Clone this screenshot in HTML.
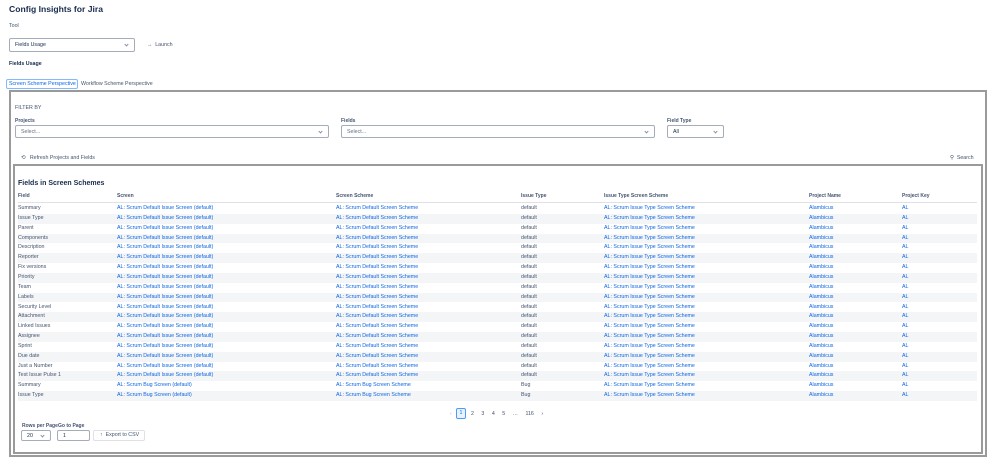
<!DOCTYPE html>
<html><head><meta charset="utf-8"><style>
*{margin:0;padding:0;box-sizing:border-box}
body{width:999px;height:471px;background:#fff;font-family:"Liberation Sans",sans-serif;color:#172b4d;position:relative;overflow:hidden}
.a{position:absolute;white-space:nowrap}
.s{font-size:5.3px;color:#44546f}
.sel{position:absolute;border:1px solid #a5adba;border-radius:2px;background:#fff;font-size:5.3px;color:#626f86;padding-left:5px;display:flex;align-items:center}
.chev{position:absolute;right:6px;top:50%;width:3px;height:3px;border-right:.6px solid #8590a2;border-bottom:.6px solid #8590a2;transform:translateY(-70%) rotate(45deg)}
.row{position:absolute;left:18px;width:959px;height:9.85px;font-size:5.3px;line-height:9.85px}
.row.sh{background:#f4f5f7}
.row span{position:absolute;top:0}
.l{color:#0c66e4}
.lab{font-size:5px;font-weight:bold;color:#44546f}
</style></head><body>
<div class="a" style="left:9px;top:4px;font-size:8.6px;font-weight:bold">Config Insights for Jira</div>
<div class="a s" style="left:9px;top:23px">Tool</div>
<div class="sel" style="left:9px;top:38px;width:126px;height:14px;color:#172b4d">Fields Usage<div class="chev"></div></div>
<div class="a s" style="left:147px;top:42px;color:#44546f">→&nbsp; Launch</div>
<div class="a lab" style="left:9px;top:61px;color:#172b4d;font-size:5.3px">Fields Usage</div>
<div class="a" style="left:6px;top:79px;width:72px;height:10px;border:1px solid #85b8ff;border-radius:2px;font-size:5.3px;color:#0c66e4;line-height:8px;padding-left:2px">Screen Scheme Perspective</div>
<div class="a s" style="left:81px;top:81px">Workflow Scheme Perspective</div>
<div class="a" style="left:9px;top:90px;width:978px;height:367px;border:2px solid #9a9a9a"></div>
<div class="a s" style="left:15px;top:105px;color:#44546f">FILTER BY</div>
<div class="a lab" style="left:15px;top:118px">Projects</div>
<div class="sel" style="left:15px;top:125px;width:314px;height:13px">Select...<div class="chev"></div></div>
<div class="a lab" style="left:341px;top:118px">Fields</div>
<div class="sel" style="left:341px;top:125px;width:314px;height:13px">Select...<div class="chev"></div></div>
<div class="a lab" style="left:667px;top:118px">Field Type</div>
<div class="sel" style="left:667px;top:125px;width:57px;height:13px;color:#172b4d">All<div class="chev"></div></div>
<div class="a s" style="left:21px;top:155px">⟲&nbsp;&nbsp; Refresh Projects and Fields</div>
<div class="a s" style="left:950px;top:155px">⚲&nbsp; Search</div>
<div class="a" style="left:13px;top:164px;width:970px;height:290px;border:2px solid #9a9a9a"></div>
<div class="a" style="left:18px;top:180px;font-size:7px;font-weight:bold">Fields in Screen Schemes</div>
<div class="row" style="top:192px;border-bottom:1px solid #dfe1e6;height:11px;font-weight:bold;color:#44546f;font-size:5px"><span style="left:0">Field</span><span style="left:99px">Screen</span><span style="left:318px">Screen Scheme</span><span style="left:503px">Issue Type</span><span style="left:586px">Issue Type Screen Scheme</span><span style="left:791px">Project Name</span><span style="left:884px">Project Key</span></div>
<div id="rows"></div>
<script>
var f=["Summary","Issue Type","Parent","Components","Description","Reporter","Fix versions","Priority","Team","Labels","Security Level","Attachment","Linked Issues","Assignee","Sprint","Due date","Just a Number","Test Issue Pulse 1","Summary","Issue Type"];
var h="";
for(var i=0;i<20;i++){var b=i>=18;
h+='<div class="row'+(i%2?' sh':'')+'" style="top:'+(204+i*9.85)+'px"><span style="left:0;color:#44546f">'+f[i]+'</span><span class="l" style="left:99px">AL: Scrum '+(b?'Bug Screen':'Default Issue Screen')+' (default)</span><span class="l" style="left:318px">AL: Scrum '+(b?'Bug':'Default')+' Screen Scheme</span><span style="left:503px;color:#44546f">'+(b?'Bug':'default')+'</span><span class="l" style="left:586px">AL: Scrum Issue Type Screen Scheme</span><span class="l" style="left:791px">Alambicus</span><span class="l" style="left:884px">AL</span></div>';}
document.getElementById("rows").innerHTML=h;
</script>
<div class="a s" style="left:450px;top:411px;color:#b3b9c4">‹</div>
<div class="a" style="left:456px;top:408px;width:10px;height:11px;border:1px solid #4c9aff;border-radius:2px;background:#e9f2ff;font-size:5.3px;color:#0c66e4;text-align:center;line-height:9px">1</div>
<div class="a s" style="left:471px;top:411px;word-spacing:6px">2 3 4 5 … 116 ›</div>
<div class="a lab" style="left:22px;top:423px">Rows per Page</div>
<div class="a lab" style="left:58px;top:423px">Go to Page</div>
<div class="sel" style="left:21px;top:430px;width:30px;height:11px;color:#172b4d">20<div class="chev"></div></div>
<div class="sel" style="left:57px;top:430px;width:33px;height:11px;color:#172b4d">1</div>
<div class="a" style="left:93px;top:430px;width:52px;height:11px;border:1px solid #dfe1e6;border-radius:2px;font-size:5.3px;color:#44546f;line-height:9px;padding-left:6px">↑&nbsp; Export to CSV</div>
</body></html>
